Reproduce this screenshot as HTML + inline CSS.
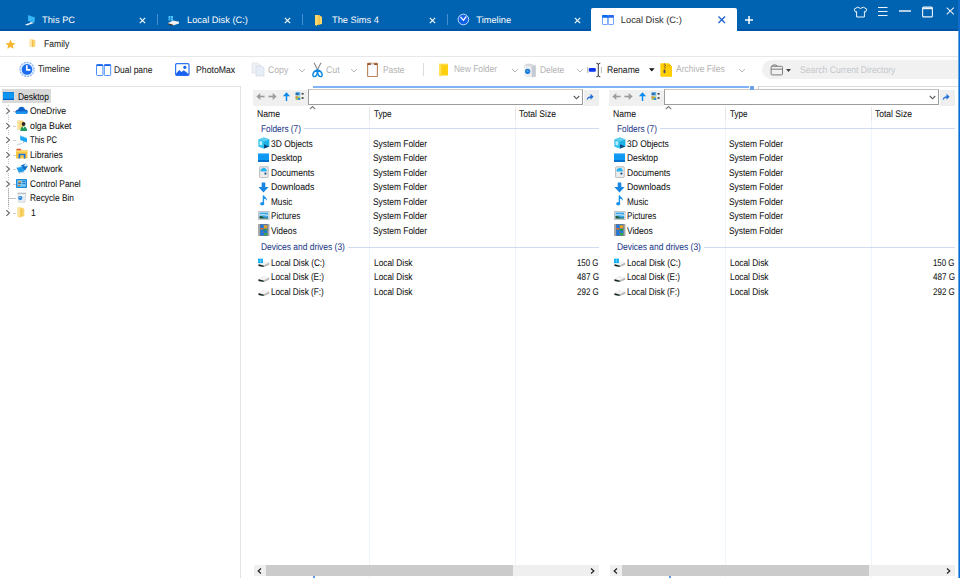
<!DOCTYPE html>
<html><head><meta charset="utf-8"><title>Explorer</title>
<style>
html,body{margin:0;padding:0;}
body{width:960px;height:578px;overflow:hidden;position:relative;background:#fff;font-family:"Liberation Sans",sans-serif;}
.t{position:absolute;white-space:nowrap;line-height:14px;text-rendering:geometricPrecision;-webkit-text-stroke:0.05px currentColor;}
.r{position:absolute;display:block;}
</style></head><body>
<div class="r" style="left:0px;top:0px;width:960px;height:29px;background:#0063b1;"></div>
<div class="r" style="left:0px;top:29px;width:960px;height:2px;background:#0052a6;"></div>
<div class="r" style="left:591px;top:8px;width:146px;height:23px;background:#fff;border-radius:2px 2px 0 0"></div>
<div class="r" style="left:157px;top:14px;width:1px;height:11px;background:#4a90d0;"></div>
<div class="r" style="left:302px;top:14px;width:1px;height:11px;background:#4a90d0;"></div>
<div class="r" style="left:447px;top:14px;width:1px;height:11px;background:#4a90d0;"></div>
<div class="t" style="left:42.00px;top:13.30px;font-size:9.3px;color:#fff;-webkit-text-stroke:0;">This PC</div>
<svg class="r" style="left:0px;top:0px;left:139.2px;top:16.8px;" width="7" height="7" viewBox="0 0 7 7"><path d="M0.8 0.8L6.2 6.2M6.2 0.8L0.8 6.2" stroke="#fff" stroke-width="1.1"/></svg>
<div class="t" style="left:187.00px;top:13.30px;font-size:9.3px;color:#fff;-webkit-text-stroke:0;">Local Disk (C:)</div>
<svg class="r" style="left:0px;top:0px;left:284.2px;top:16.8px;" width="7" height="7" viewBox="0 0 7 7"><path d="M0.8 0.8L6.2 6.2M6.2 0.8L0.8 6.2" stroke="#fff" stroke-width="1.1"/></svg>
<div class="t" style="left:332.00px;top:13.30px;font-size:9.3px;color:#fff;-webkit-text-stroke:0;">The Sims 4</div>
<svg class="r" style="left:0px;top:0px;left:429.2px;top:16.8px;" width="7" height="7" viewBox="0 0 7 7"><path d="M0.8 0.8L6.2 6.2M6.2 0.8L0.8 6.2" stroke="#fff" stroke-width="1.1"/></svg>
<div class="t" style="left:476.30px;top:13.30px;font-size:9.3px;color:#fff;-webkit-text-stroke:0;">Timeline</div>
<svg class="r" style="left:0px;top:0px;left:574.2px;top:16.8px;" width="7" height="7" viewBox="0 0 7 7"><path d="M0.8 0.8L6.2 6.2M6.2 0.8L0.8 6.2" stroke="#fff" stroke-width="1.1"/></svg>
<div class="t" style="left:620.80px;top:13.30px;font-size:9.3px;color:#333;">Local Disk (C:)</div>
<svg class="r" style="left:718px;top:16px;" width="8" height="8" viewBox="0 0 8 8"><path d="M0.5 0.5L7 7M7 0.5L0.5 7" stroke="#1a5fd0" stroke-width="1.3"/></svg>
<svg class="r" style="left:745px;top:16px;" width="8" height="8" viewBox="0 0 8 8"><path d="M4 0V8M0 4H8" stroke="#fff" stroke-width="1.5"/></svg>
<svg class="r" style="left:24px;top:14px;" width="12" height="12" viewBox="0 0 12 12"><path d="M4 1L11 3.5L10.5 8.5L4 7Z" fill="#33b5f5"/><path d="M1 10.5L7 8.5L9 9.2L3 11.5Z" fill="#e8eef5"/><path d="M6 8.3L9.5 9" stroke="#cde" stroke-width="1"/></svg>
<svg class="r" style="left:167px;top:15px;" width="13" height="11" viewBox="0 0 13 11"><path d="M1.5 1h2v2.2h-2zM4 1h2v2.2H4zM1.5 3.6h2v2h-2zM4 3.6h2v2H4z" fill="#4cc2ff"/><path d="M1 8L6 5.5L12 6.8V8.5L6 10.5L1 9.3Z" fill="#f0f0f0"/><path d="M1 8.8L6 10.3" stroke="#333" stroke-width="1.3"/></svg>
<svg class="r" style="left:314px;top:14px;" width="9" height="12" viewBox="0 0 9 12"><path d="M1 1H5L8 3V10L3 11V12L1 11Z" fill="#f8d66a"/><path d="M5 1V11" stroke="#e9b840" stroke-width="1"/></svg>
<svg class="r" style="left:457px;top:13px;" width="13" height="13" viewBox="0 0 13 13"><circle cx="6.4" cy="6.5" r="5.3" fill="#1260e6" stroke="#bfe0ff" stroke-width="1"/><path d="M3.5 3.8L6.4 7.3L9.3 3.5" stroke="#fff" stroke-width="1.3" fill="none"/></svg>
<svg class="r" style="left:602px;top:15px;" width="12" height="10" viewBox="0 0 12 10"><rect x="0.5" y="0.5" width="5.2" height="9" rx="0.6" fill="#fff" stroke="#5c9af6" stroke-width="0.9"/><rect x="6.3" y="0.5" width="5.2" height="9" rx="0.6" fill="#fff" stroke="#5c9af6" stroke-width="0.9"/><rect x="0.1" y="0.1" width="5.9" height="2.6" rx="0.6" fill="#0a6cf4"/><rect x="6" y="0.1" width="5.9" height="2.6" rx="0.6" fill="#2a6af0"/></svg>
<svg class="r" style="left:853px;top:6px;" width="15" height="12" viewBox="0 0 15 12"><path d="M4.6 1.2L1.2 3.1L2.4 6L3.6 5.5V11H11.4V5.5L12.6 6L13.8 3.1L10.4 1.2Q7.5 3.6 4.6 1.2Z" fill="none" stroke="#f2f6fb" stroke-width="1"/></svg>
<svg class="r" style="left:878px;top:6px;" width="10" height="11" viewBox="0 0 10 11"><path d="M0 1.5H9.5M0 5.5H9.5M0 9.5H9.5" stroke="#eef3f9" stroke-width="1.1"/></svg>
<svg class="r" style="left:899px;top:10px;" width="13" height="2" viewBox="0 0 13 2"><path d="M0 1H12" stroke="#eef3f9" stroke-width="1.5"/></svg>
<svg class="r" style="left:922px;top:6px;" width="11" height="12" viewBox="0 0 11 12"><rect x="0.6" y="1.1" width="9.8" height="9.8" rx="1" fill="none" stroke="#eef3f9" stroke-width="1.1"/><path d="M0.8 2.4H10.2" stroke="#eef3f9" stroke-width="1.6"/></svg>
<svg class="r" style="left:946px;top:7px;" width="9" height="8" viewBox="0 0 9 8"><path d="M0.7 0.7L7.8 7.3M7.8 0.7L0.7 7.3" stroke="#eef3f9" stroke-width="1.05"/></svg>
<svg class="r" style="left:5px;top:39px;" width="11" height="10" viewBox="0 0 11 10"><path d="M5.5 0.6L7 3.9L10.5 4.2L7.9 6.5L8.7 9.7L5.5 8L2.3 9.7L3.1 6.5L0.5 4.2L4 3.9Z" fill="#f7b731"/></svg>
<svg class="r" style="left:29px;top:39px;" width="7" height="9" viewBox="0 0 7 9"><path d="M0.7 0.6H4.6L6.3 1.6V7.4L3.4 8.2L0.7 7.6Z" fill="#fbd46a"/><path d="M0.7 0.6H3V7.8L0.7 7.6Z" fill="#fde7a8"/><path d="M3.6 1.2V7.8" stroke="#eab54a" stroke-width="0.8"/></svg>
<div class="t" style="left:43.75px;top:38.30px;font-size:9.7px;color:#222;transform:scaleX(0.8839);transform-origin:0 0;">Family</div>
<div class="r" style="left:0px;top:56px;width:958px;height:1px;background:#e8e8e8;"></div>
<svg class="r" style="left:19px;top:61px;" width="16" height="17" viewBox="0 0 16 17"><circle cx="8" cy="8.4" r="7.1" fill="#e4eefd" stroke="#8ab6f8" stroke-width="1.2" stroke-dasharray="2 1"/><circle cx="8" cy="8.4" r="5.3" fill="#1a6cf0"/><path d="M7.8 4.3V8.9H11.4" stroke="#fff" stroke-width="1.7" fill="none"/></svg>
<div class="t" style="left:37.80px;top:63.30px;font-size:9.7px;color:#222;transform:scaleX(0.8766);transform-origin:0 0;-webkit-text-stroke:0;">Timeline</div>
<svg class="r" style="left:96px;top:64px;" width="16" height="12" viewBox="0 0 16 12"><rect x="0.5" y="0.5" width="6.4" height="11" rx="0.8" fill="#fff" stroke="#4a90f8" stroke-width="1"/><rect x="8.3" y="0.5" width="6.4" height="11" rx="0.8" fill="#fff" stroke="#4a90f8" stroke-width="1"/><path d="M0.6 1.3H6.8M8.4 1.3H14.6" stroke="#1560e8" stroke-width="1.6"/></svg>
<div class="t" style="left:114.00px;top:64.30px;font-size:9.7px;color:#222;transform:scaleX(0.8704);transform-origin:0 0;">Dual pane</div>
<svg class="r" style="left:175px;top:63px;" width="15" height="13" viewBox="0 0 15 13"><rect x="0.6" y="0.6" width="13.4" height="11.8" rx="1.2" fill="#fff" stroke="#2f74f2" stroke-width="1.2"/><path d="M1 12.2V10.8L4.2 7L6.5 9L8.8 7.3L13.6 11V12.2Z" fill="#1a62f0"/><circle cx="9.8" cy="4.3" r="1.6" fill="#1a62f0"/></svg>
<div class="t" style="left:195.80px;top:64.30px;font-size:9.7px;color:#222;transform:scaleX(0.8971);transform-origin:0 0;">PhotoMax</div>
<svg class="r" style="left:251px;top:62px;" width="14" height="15" viewBox="0 0 14 15"><path d="M1 1H7L9 3V11H1Z" fill="#eef2f7" stroke="#dde3ea" stroke-width="0.8"/><path d="M5 4H11L13 6V14H5Z" fill="#e6edf5" stroke="#d5dde7" stroke-width="0.8"/></svg>
<div class="t" style="left:267.50px;top:64.30px;font-size:9.7px;color:#b2b2b2;transform:scaleX(0.8963);transform-origin:0 0;-webkit-text-stroke:0;">Copy</div>
<svg class="r" style="left:298px;top:68px;" width="8" height="5" viewBox="0 0 8 5"><path d="M1 1L4 4L7 1" stroke="#b8b8b8" fill="none"/></svg>
<svg class="r" style="left:311px;top:62px;" width="13" height="16" viewBox="0 0 13 16"><path d="M3 0.8L6.4 7.6M10 0.8L6.6 7.6" stroke="#8a8a8a" stroke-width="1.1"/><path d="M6.2 8Q2.5 9 1.8 12.4Q1.8 14.6 3.6 14.6Q5.6 14.4 6.2 11.5Z" fill="none" stroke="#0f8ae0" stroke-width="1.4"/><path d="M6.8 8Q10.5 9 11.2 12.4Q11.2 14.6 9.4 14.6Q7.4 14.4 6.8 11.5Z" fill="none" stroke="#0f8ae0" stroke-width="1.4"/></svg>
<div class="t" style="left:326.00px;top:64.30px;font-size:9.7px;color:#b2b2b2;transform:scaleX(0.9083);transform-origin:0 0;-webkit-text-stroke:0;">Cut</div>
<svg class="r" style="left:350px;top:68px;" width="8" height="5" viewBox="0 0 8 5"><path d="M1 1L4 4L7 1" stroke="#b8b8b8" fill="none"/></svg>
<svg class="r" style="left:367px;top:62px;" width="11" height="15" viewBox="0 0 11 15"><rect x="0.6" y="1.3" width="9.8" height="13.2" rx="0.6" fill="#fafcff" stroke="#bb845a" stroke-width="1.1"/><path d="M0.6 1.3H3.8V3H0.6ZM7.2 1.3H10.4V3H7.2Z" fill="#9a5020"/><path d="M5.5 0.2L7 3H4Z" fill="#d8d8d8"/></svg>
<div class="t" style="left:383.00px;top:64.30px;font-size:9.7px;color:#b2b2b2;transform:scaleX(0.8675);transform-origin:0 0;-webkit-text-stroke:0;">Paste</div>
<div class="r" style="left:423px;top:63px;width:1px;height:13px;background:#dcdcdc;"></div>
<svg class="r" style="left:438px;top:63px;" width="11" height="14" viewBox="0 0 11 14"><path d="M1 0.7H10V12.4H3.2V13.6L1 12.2Z" fill="#ffcf12"/><path d="M1 0.7L3.2 1.6V13.6L1 12.2Z" fill="#ffe15a"/><path d="M3.2 1.6H10" stroke="#ffe880" stroke-width="0.6"/></svg>
<div class="t" style="left:453.50px;top:63.30px;font-size:9.7px;color:#b2b2b2;transform:scaleX(0.8687);transform-origin:0 0;-webkit-text-stroke:0;">New Folder</div>
<svg class="r" style="left:511px;top:68px;" width="8" height="5" viewBox="0 0 8 5"><path d="M1 1L4 4L7 1" stroke="#b8b8b8" fill="none"/></svg>
<svg class="r" style="left:523px;top:62px;" width="14" height="16" viewBox="0 0 14 16"><path d="M1 3.2L5 1.6L12.8 3.2V14.4L9.2 15.6L1.6 14.4Z" fill="#e9ecef"/><path d="M8.4 4.2L12.8 3.2V14.4L9.2 15.6Z" fill="#c5cbd2"/><path d="M1 3.2L5 1.6L12.8 3.2L8.4 4.2Z" fill="#d4d8dc"/><circle cx="4.6" cy="9.3" r="2.6" fill="#1479d6"/><path d="M3.8 9.8L4.6 8.6L5.4 9.8" stroke="#cfe8ff" stroke-width="0.6" fill="none"/></svg>
<div class="t" style="left:539.80px;top:64.30px;font-size:9.7px;color:#b2b2b2;transform:scaleX(0.8633);transform-origin:0 0;-webkit-text-stroke:0;">Delete</div>
<svg class="r" style="left:576px;top:68px;" width="8" height="5" viewBox="0 0 8 5"><path d="M1 1L4 4L7 1" stroke="#b8b8b8" fill="none"/></svg>
<svg class="r" style="left:586px;top:62px;" width="17" height="16" viewBox="0 0 17 16"><path d="M1.7 5V11" stroke="#9a9a9a" stroke-width="0.8"/><rect x="2.8" y="6" width="7" height="3.7" rx="1" fill="#0a36f0"/><path d="M10.3 1.2Q12.3 1.2 12.3 2.8Q12.3 1.2 14.3 1.2M12.3 2.8V13.2M10.3 14.8Q12.3 14.8 12.3 13.2Q12.3 14.8 14.3 14.8" stroke="#262626" stroke-width="0.9" fill="none"/><path d="M15.4 5V11" stroke="#ababab" stroke-width="0.8"/></svg>
<div class="t" style="left:607.00px;top:64.30px;font-size:9.7px;color:#222;transform:scaleX(0.8918);transform-origin:0 0;">Rename</div>
<svg class="r" style="left:649px;top:68px;" width="6" height="4" viewBox="0 0 6 4"><path d="M0 0.3H5.6L2.8 3.4Z" fill="#111"/></svg>
<svg class="r" style="left:660px;top:63px;" width="13" height="14" viewBox="0 0 13 14"><path d="M0.4 0.3H8.6L12 3.6V13.8H0.4Z" fill="#ffcf00"/><path d="M8.6 0.3V3.6H12Z" fill="#f0bf00"/><circle cx="4.4" cy="1.2" r="0.6" fill="#7a4a3a"/><circle cx="5.4" cy="2.4" r="0.6" fill="#7a4a5a"/><circle cx="4.4" cy="3.6" r="0.6" fill="#7a4a3a"/><circle cx="5.4" cy="4.8" r="0.6" fill="#7a4a5a"/><circle cx="4.4" cy="6" r="0.6" fill="#7a4a3a"/><rect x="3.6" y="6.8" width="1.8" height="3.4" rx="0.8" fill="#4a4a6a"/><path d="M7.5 2.5L8 3.5" stroke="#b89a30" stroke-width="0.6"/></svg>
<div class="t" style="left:675.70px;top:63.30px;font-size:9.7px;color:#b2b2b2;transform:scaleX(0.8788);transform-origin:0 0;-webkit-text-stroke:0;">Archive Files</div>
<svg class="r" style="left:738px;top:68px;" width="8" height="5" viewBox="0 0 8 5"><path d="M1 1L4 4L7 1" stroke="#b8b8b8" fill="none"/></svg>
<div class="r" style="left:762px;top:60px;width:200px;height:19px;background:#f1f1f1;border-radius:10px 0 0 10px"></div>
<svg class="r" style="left:770px;top:64px;" width="14" height="12" viewBox="0 0 14 12"><rect x="1.1" y="2.3" width="11.4" height="8.6" rx="1" fill="none" stroke="#7c7c7c" stroke-width="1"/><path d="M1.1 5.2H12.5M1.4 2.5L2.8 1H6.2L7.2 2.3" stroke="#7c7c7c" stroke-width="1" fill="none"/></svg>
<svg class="r" style="left:786px;top:69px;" width="5" height="3" viewBox="0 0 5 3"><path d="M0 0H5L2.5 3Z" fill="#444"/></svg>
<div class="t" style="left:800.00px;top:64.30px;font-size:9.7px;color:#c4c8cc;transform:scaleX(0.8902);transform-origin:0 0;-webkit-text-stroke:0;">Search Current Directory</div>
<div class="r" style="left:0px;top:86px;width:241px;height:1px;background:#e3e3e3;"></div>
<div class="r" style="left:758px;top:86px;width:200px;height:1px;background:#dedede;"></div>
<div class="r" style="left:758px;top:86px;width:1px;height:4px;background:#d0d0d0;"></div>
<div class="r" style="left:240px;top:86px;width:1px;height:492px;background:#e3e3e3;"></div>
<div class="r" style="left:2px;top:89px;width:49px;height:14px;background:#d9d9d9;"></div>
<div class="t" style="left:17.60px;top:91.30px;font-size:9.7px;color:#111;transform:scaleX(0.8708);transform-origin:0 0;">Desktop</div>
<div class="t" style="left:30.30px;top:105.30px;font-size:9.7px;color:#111;transform:scaleX(0.8784);transform-origin:0 0;">OneDrive</div>
<svg class="r" style="left:5px;top:107px;" width="6" height="8" viewBox="0 0 6 8"><path d="M1.3 1.2L4.5 4L1.3 6.8" stroke="#666" fill="none" stroke-width="1.1"/></svg>
<div class="r" style="left:13px;top:111px;width:3px;height:1px;background:#cfcfcf;"></div>
<div class="r" style="left:8px;top:105px;width:1px;height:2px;background:#fff;background:repeating-linear-gradient(to bottom,#c2c2c2 0 1px,transparent 1px 2px)"></div>
<div class="t" style="left:30.20px;top:120.30px;font-size:9.7px;color:#111;transform:scaleX(0.9077);transform-origin:0 0;">olga Buket</div>
<svg class="r" style="left:5px;top:122px;" width="6" height="8" viewBox="0 0 6 8"><path d="M1.3 1.2L4.5 4L1.3 6.8" stroke="#666" fill="none" stroke-width="1.1"/></svg>
<div class="r" style="left:13px;top:126px;width:3px;height:1px;background:#cfcfcf;"></div>
<div class="r" style="left:8px;top:115px;width:1px;height:7px;background:#fff;background:repeating-linear-gradient(to bottom,#c2c2c2 0 1px,transparent 1px 2px)"></div>
<div class="t" style="left:30.30px;top:134.30px;font-size:9.7px;color:#111;transform:scaleX(0.7830);transform-origin:0 0;">This PC</div>
<svg class="r" style="left:5px;top:136px;" width="6" height="8" viewBox="0 0 6 8"><path d="M1.3 1.2L4.5 4L1.3 6.8" stroke="#666" fill="none" stroke-width="1.1"/></svg>
<div class="r" style="left:13px;top:140px;width:3px;height:1px;background:#cfcfcf;"></div>
<div class="r" style="left:8px;top:130px;width:1px;height:6px;background:#fff;background:repeating-linear-gradient(to bottom,#c2c2c2 0 1px,transparent 1px 2px)"></div>
<div class="t" style="left:30.30px;top:149.30px;font-size:9.7px;color:#111;transform:scaleX(0.8817);transform-origin:0 0;">Libraries</div>
<svg class="r" style="left:5px;top:151px;" width="6" height="8" viewBox="0 0 6 8"><path d="M1.3 1.2L4.5 4L1.3 6.8" stroke="#666" fill="none" stroke-width="1.1"/></svg>
<div class="r" style="left:13px;top:155px;width:3px;height:1px;background:#cfcfcf;"></div>
<div class="r" style="left:8px;top:144px;width:1px;height:7px;background:#fff;background:repeating-linear-gradient(to bottom,#c2c2c2 0 1px,transparent 1px 2px)"></div>
<div class="t" style="left:30.40px;top:163.30px;font-size:9.7px;color:#111;transform:scaleX(0.9145);transform-origin:0 0;">Network</div>
<svg class="r" style="left:5px;top:165px;" width="6" height="8" viewBox="0 0 6 8"><path d="M1.3 1.2L4.5 4L1.3 6.8" stroke="#666" fill="none" stroke-width="1.1"/></svg>
<div class="r" style="left:13px;top:169px;width:3px;height:1px;background:#cfcfcf;"></div>
<div class="r" style="left:8px;top:159px;width:1px;height:6px;background:#fff;background:repeating-linear-gradient(to bottom,#c2c2c2 0 1px,transparent 1px 2px)"></div>
<div class="t" style="left:30.30px;top:178.30px;font-size:9.7px;color:#111;transform:scaleX(0.8642);transform-origin:0 0;">Control Panel</div>
<svg class="r" style="left:5px;top:180px;" width="6" height="8" viewBox="0 0 6 8"><path d="M1.3 1.2L4.5 4L1.3 6.8" stroke="#666" fill="none" stroke-width="1.1"/></svg>
<div class="r" style="left:13px;top:184px;width:3px;height:1px;background:#cfcfcf;"></div>
<div class="r" style="left:8px;top:173px;width:1px;height:7px;background:#fff;background:repeating-linear-gradient(to bottom,#c2c2c2 0 1px,transparent 1px 2px)"></div>
<div class="t" style="left:30.30px;top:192.30px;font-size:9.7px;color:#111;transform:scaleX(0.8591);transform-origin:0 0;">Recycle Bin</div>
<div class="r" style="left:9px;top:198px;width:7px;height:1px;background:#c4c4c4;"></div>
<div class="r" style="left:8px;top:188px;width:1px;height:18px;background:#fff;background:repeating-linear-gradient(to bottom,#a8a8a8 0 1px,#dadada 1px 2px)"></div>
<div class="t" style="left:31.00px;top:207.30px;font-size:9.7px;color:#111;transform:scaleX(0.8900);transform-origin:0 0;">1</div>
<svg class="r" style="left:5px;top:209px;" width="6" height="8" viewBox="0 0 6 8"><path d="M1.3 1.2L4.5 4L1.3 6.8" stroke="#666" fill="none" stroke-width="1.1"/></svg>
<div class="r" style="left:13px;top:213px;width:3px;height:1px;background:#cfcfcf;"></div>
<div class="r" style="left:8px;top:206px;width:1px;height:3px;background:#fff;background:repeating-linear-gradient(to bottom,#c2c2c2 0 1px,transparent 1px 2px)"></div>
<svg class="r" style="left:3px;top:92px;" width="11" height="8" viewBox="0 0 11 8"><rect x="0" y="0" width="11" height="8" fill="#0c95f2"/><rect x="0" y="6.8" width="11" height="1.2" fill="#0062c8"/><rect x="0" y="0" width="11" height="0.8" fill="#0a7ad8"/></svg>
<svg class="r" style="left:15px;top:106px;" width="13" height="8" viewBox="0 0 13 8"><path d="M3 8Q0 8 0.5 5.5Q1 3.5 3 3.8Q4 0.5 7 0.8Q9.5 1 10 3.5Q13 3.7 12.8 6Q12.5 8 10.5 8Z" fill="#0f62c8"/><path d="M0.5 6Q1 8 3 8H10.5Q12.5 8 12.8 6Q10 4.8 6 5.6Q3 4.5 0.5 6Z" fill="#1f96ee"/></svg>
<svg class="r" style="left:17px;top:120px;" width="11" height="12" viewBox="0 0 11 12"><path d="M0.5 0.5H5.5L7 1.8V8.5L0.5 10Z" fill="#f6d47a"/><path d="M0.5 0.5H2.5V10H0.5Z" fill="#fbe3a0"/><circle cx="6.6" cy="4" r="1.9" fill="#2e2620"/><path d="M3.3 11Q3.6 6.6 6.6 6.6Q9.8 6.6 10.2 11Z" fill="#1f9a5a"/><path d="M5.8 6.8L6.6 8.5L7.4 6.8Z" fill="#fff"/></svg>
<svg class="r" style="left:16px;top:135px;" width="12" height="11" viewBox="0 0 12 11"><path d="M4.2 0.6L11 3.2V7.4L4.2 5Z" fill="#19a6f2"/><path d="M4.2 0.6L11 3.2" stroke="#8fd8ff" stroke-width="0.8"/><path d="M7.5 6.2V8" stroke="#9bb0c0" stroke-width="0.8"/><path d="M0.5 9.3L5.5 7.8L7.5 8.3L2.5 10.5Z" fill="#d3dfea"/></svg>
<svg class="r" style="left:16px;top:148px;" width="12" height="11" viewBox="0 0 12 11"><rect x="0" y="2" width="11.5" height="8.5" fill="#f9c843"/><rect x="0" y="2" width="11.5" height="2" fill="#fbd970"/><path d="M0.5 2.2V0.8H4.5L5.5 2.2Z" fill="#e2542a"/><path d="M2.5 10.5V5.8H9.5V10.5H7.8V7.3H4.2V10.5Z" fill="#1a72da"/></svg>
<svg class="r" style="left:16px;top:163px;" width="12" height="11" viewBox="0 0 12 11"><path d="M5 2.5L9.5 0.6L11.8 3.2L9 7.5L5 5Z" fill="#0f6fc6"/><path d="M0.5 4.8L6.2 3.4L8.6 8.3L2.8 9.8Z" fill="#1e9ae8"/><path d="M0.5 4.8L6.2 3.4" stroke="#9ad4f8" stroke-width="0.8"/><path d="M3 10.5L8 9.2" stroke="#c0ccd8" stroke-width="0.8"/><circle cx="9.6" cy="2.3" r="1.2" fill="#d8ecfa"/></svg>
<svg class="r" style="left:16px;top:179px;" width="11" height="9" viewBox="0 0 11 9"><rect x="0" y="0" width="11" height="9" rx="0.8" fill="#1a8ce0"/><rect x="1.2" y="1.2" width="8.6" height="6.6" fill="#74c8f6"/><circle cx="3.6" cy="3.4" r="1.6" fill="#f0b732"/><path d="M2 3.4A1.6 1.6 0 0 0 5.2 3.4Z" fill="#2a67c0"/><path d="M6.3 2.5H9.2M6.3 4.5H9.2" stroke="#1f64b8" stroke-width="0.9"/><rect x="1.8" y="6" width="2.4" height="1.2" fill="#c8702a"/></svg>
<svg class="r" style="left:17px;top:192px;" width="10" height="11" viewBox="0 0 10 11"><path d="M0.8 1.5H8.8L8 10.2H1.6Z" fill="#e8edf2" stroke="#c2c9d0" stroke-width="0.6"/><path d="M0.5 1.2H9.2" stroke="#aeb6be" stroke-width="0.9"/><path d="M2.2 3.5L8 3.5" stroke="#fff" stroke-width="0.8"/><circle cx="3.3" cy="6" r="2.1" fill="#1a7fd8"/><path d="M2.3 6.2L3.2 5.2L4.2 6.4" stroke="#fff" stroke-width="0.6" fill="none"/></svg>
<svg class="r" style="left:17px;top:207px;" width="8" height="11" viewBox="0 0 8 11"><path d="M0.6 0.5H4.5L7.3 1.8V9L3 10.4V10.8L0.6 9.6Z" fill="#fad36b"/><path d="M0.6 0.5H3V9.8L0.6 9.6Z" fill="#fde39a"/><path d="M4.3 1.5V9.8" stroke="#efbe4a" stroke-width="0.9"/></svg>
<div class="r" style="left:253px;top:90px;width:55px;height:16px;background:#f0f0f0;"></div>
<svg class="r" style="left:256px;top:92px;" width="9" height="9" viewBox="0 0 9 9"><path d="M8.6 4.5H3.2" stroke="#9c9c9c" stroke-width="1.6"/><path d="M0.4 4.5L4.3 1V8Z" fill="#9c9c9c"/></svg>
<svg class="r" style="left:268px;top:92px;" width="9" height="9" viewBox="0 0 9 9"><path d="M0.4 4.5H5.8" stroke="#9c9c9c" stroke-width="1.6"/><path d="M8.6 4.5L4.7 1V8Z" fill="#9c9c9c"/></svg>
<svg class="r" style="left:282px;top:92px;" width="9" height="9" viewBox="0 0 9 9"><path d="M4.5 3.5V9" stroke="#0c8cf0" stroke-width="1.5"/><path d="M4.5 0.3L0.9 4.3H8.1Z" fill="#0c8cf0"/></svg>
<svg class="r" style="left:295px;top:91px;" width="10" height="10" viewBox="0 0 10 10"><rect x="0.6" y="1" width="4.6" height="3.6" fill="#5aaee8"/><rect x="0.6" y="2.4" width="3" height="1.2" fill="#1c3e70"/><rect x="0.6" y="5.4" width="4.6" height="3.6" fill="#8fd06a"/><rect x="0.6" y="5.4" width="2.2" height="2" fill="#e8803a"/><rect x="3" y="7" width="2.2" height="2" fill="#2f8ae0"/><rect x="6.6" y="2" width="2" height="1.6" fill="#3a3a3a"/><rect x="6.6" y="6.2" width="2" height="1.6" fill="#3a3a3a"/></svg>
<div class="r" style="left:308px;top:89px;width:275px;height:16px;background:#fff;box-sizing:border-box;border:1px solid #9c9c9c;border-top-color:#c2c2c2"></div>
<svg class="r" style="left:573px;top:95px;" width="7" height="5" viewBox="0 0 7 5"><path d="M0.8 1L3.5 3.8L6.2 1" stroke="#585858" stroke-width="1.1" fill="none"/></svg>
<div class="r" style="left:584px;top:90px;width:15px;height:16px;background:#efefef;"></div>
<svg class="r" style="left:586px;top:93px;" width="8" height="8" viewBox="0 0 8 8"><path d="M0.8 7.5Q0.5 3.5 4.5 3.2V0.8L7.6 3.8L4.5 6.8V4.8Q2 4.8 0.8 7.5Z" fill="#1f6fd6"/></svg>
<svg class="r" style="left:309px;top:105px;" width="7" height="5" viewBox="0 0 7 5"><path d="M0.8 4.2L3.5 1.5L6.2 4.2" stroke="#7a7a7a" fill="none" stroke-width="1.1"/></svg>
<div class="t" style="left:257.20px;top:108.30px;font-size:9.7px;color:#111;transform:scaleX(0.8881);transform-origin:0 0;">Name</div>
<div class="t" style="left:373.70px;top:108.30px;font-size:9.7px;color:#111;transform:scaleX(0.8314);transform-origin:0 0;">Type</div>
<div class="t" style="left:519.20px;top:108.30px;font-size:9.7px;color:#111;transform:scaleX(0.8775);transform-origin:0 0;">Total Size</div>
<div class="r" style="left:369px;top:107px;width:1px;height:14px;background:#e5e5e5;"></div>
<div class="r" style="left:515px;top:107px;width:1px;height:14px;background:#e5e5e5;"></div>
<div class="r" style="left:369px;top:121px;width:1px;height:457px;background:#eef5fc;"></div>
<div class="r" style="left:515px;top:121px;width:1px;height:457px;background:#eef5fc;"></div>
<div class="t" style="left:260.80px;top:123.30px;font-size:9.7px;color:#1e3a8a;transform:scaleX(0.8529);transform-origin:0 0;">Folders (7)</div>
<div class="r" style="left:304px;top:128px;width:295px;height:1px;background:#cfdcf0;"></div>
<div class="t" style="left:271.30px;top:138.30px;font-size:9.7px;color:#111;transform:scaleX(0.8714);transform-origin:0 0;">3D Objects</div>
<div class="t" style="left:373.10px;top:138.30px;font-size:9.7px;color:#111;transform:scaleX(0.8654);transform-origin:0 0;">System Folder</div>
<div class="t" style="left:271.30px;top:152.30px;font-size:9.7px;color:#111;transform:scaleX(0.8708);transform-origin:0 0;">Desktop</div>
<div class="t" style="left:373.10px;top:152.30px;font-size:9.7px;color:#111;transform:scaleX(0.8654);transform-origin:0 0;">System Folder</div>
<div class="t" style="left:271.30px;top:167.30px;font-size:9.7px;color:#111;transform:scaleX(0.8842);transform-origin:0 0;">Documents</div>
<div class="t" style="left:373.10px;top:167.30px;font-size:9.7px;color:#111;transform:scaleX(0.8654);transform-origin:0 0;">System Folder</div>
<div class="t" style="left:271.30px;top:181.30px;font-size:9.7px;color:#111;transform:scaleX(0.9048);transform-origin:0 0;">Downloads</div>
<div class="t" style="left:373.10px;top:181.30px;font-size:9.7px;color:#111;transform:scaleX(0.8654);transform-origin:0 0;">System Folder</div>
<div class="t" style="left:271.30px;top:196.30px;font-size:9.7px;color:#111;transform:scaleX(0.8453);transform-origin:0 0;">Music</div>
<div class="t" style="left:373.10px;top:196.30px;font-size:9.7px;color:#111;transform:scaleX(0.8654);transform-origin:0 0;">System Folder</div>
<div class="t" style="left:271.30px;top:210.30px;font-size:9.7px;color:#111;transform:scaleX(0.8339);transform-origin:0 0;">Pictures</div>
<div class="t" style="left:373.10px;top:210.30px;font-size:9.7px;color:#111;transform:scaleX(0.8654);transform-origin:0 0;">System Folder</div>
<div class="t" style="left:271.30px;top:225.30px;font-size:9.7px;color:#111;transform:scaleX(0.8715);transform-origin:0 0;">Videos</div>
<div class="t" style="left:373.10px;top:225.30px;font-size:9.7px;color:#111;transform:scaleX(0.8654);transform-origin:0 0;">System Folder</div>
<div class="t" style="left:260.60px;top:241.30px;font-size:9.7px;color:#1e3a8a;transform:scaleX(0.8703);transform-origin:0 0;">Devices and drives (3)</div>
<div class="r" style="left:348px;top:247px;width:251px;height:1px;background:#cfdcf0;"></div>
<div class="t" style="left:271.10px;top:257.30px;font-size:9.7px;color:#111;transform:scaleX(0.8477);transform-origin:0 0;">Local Disk (C:)</div>
<div class="t" style="left:577.40px;top:257.30px;font-size:9.7px;color:#111;transform:scaleX(0.8096);transform-origin:0 0;">150 G</div>
<div class="t" style="left:373.90px;top:257.30px;font-size:9.7px;color:#111;transform:scaleX(0.8613);transform-origin:0 0;">Local Disk</div>
<div class="t" style="left:271.10px;top:271.30px;font-size:9.7px;color:#111;transform:scaleX(0.8422);transform-origin:0 0;">Local Disk (E:)</div>
<div class="t" style="left:576.60px;top:271.30px;font-size:9.7px;color:#111;transform:scaleX(0.8399);transform-origin:0 0;">487 G</div>
<div class="t" style="left:373.90px;top:271.30px;font-size:9.7px;color:#111;transform:scaleX(0.8613);transform-origin:0 0;">Local Disk</div>
<div class="t" style="left:271.10px;top:286.30px;font-size:9.7px;color:#111;transform:scaleX(0.8446);transform-origin:0 0;">Local Disk (F:)</div>
<div class="t" style="left:577.00px;top:286.30px;font-size:9.7px;color:#111;transform:scaleX(0.8247);transform-origin:0 0;">292 G</div>
<div class="t" style="left:373.90px;top:286.30px;font-size:9.7px;color:#111;transform:scaleX(0.8613);transform-origin:0 0;">Local Disk</div>
<svg class="r" style="left:258px;top:137px;" width="12" height="12" viewBox="0 0 12 12"><path d="M6 0.6L11.4 2.6V9.4L6 11.4L0.6 9.4V2.6Z" fill="#1fb2e4"/><path d="M0.6 2.6L6 0.6L11.4 2.6L6 4.6Z" fill="#5fd0f2"/><path d="M0.6 2.6L6 4.6V11.4L0.6 9.4Z" fill="#2cc0ec"/><path d="M1.5 4.2H4.2V8.2H1.5Z" fill="#bdeeff"/><path d="M6 11.4L11.4 9.4L6 7.2Z" fill="#10477f"/></svg>
<svg class="r" style="left:258px;top:153px;" width="11" height="9" viewBox="0 0 11 9"><rect x="0" y="0.6" width="11" height="8.2" fill="#0f98f2"/><rect x="0" y="7.2" width="11" height="1.6" fill="#0066c4"/><rect x="0" y="0.6" width="11" height="0.8" fill="#2aa8f6"/></svg>
<svg class="r" style="left:259px;top:166px;" width="10" height="12" viewBox="0 0 10 12"><rect x="0.6" y="0.8" width="8.6" height="10.8" rx="0.8" fill="#ececec" stroke="#b4b4b4" stroke-width="0.9"/><path d="M1.5 4.8Q1.4 2.6 3.3 2.6Q4 1.3 5.4 1.9Q7.3 1.9 7.4 3.8Q8.3 4.3 7.6 5.6H2.2Q1.6 5.4 1.5 4.8Z" fill="#2ab4f0"/><circle cx="6.4" cy="7.6" r="1.1" fill="#1c4f86"/></svg>
<svg class="r" style="left:258px;top:182px;" width="11" height="11" viewBox="0 0 11 11"><path d="M3.7 0.6H7.3V5H10.6L5.5 10.6L0.4 5H3.7Z" fill="#1686e2"/></svg>
<svg class="r" style="left:260px;top:195px;" width="8" height="11" viewBox="0 0 8 11"><path d="M3.4 0.4V8.3" stroke="#1c92ea" stroke-width="1.4"/><ellipse cx="2.2" cy="8.7" rx="2.1" ry="1.8" fill="#1c92ea"/><path d="M3.2 0.4Q6.8 2.2 7.2 5.8Q6 3.8 3.6 3.6Z" fill="#1c92ea"/></svg>
<svg class="r" style="left:258px;top:211px;" width="12" height="9" viewBox="0 0 12 9"><rect x="0.5" y="0.5" width="10.6" height="8" fill="#f4f4f4" stroke="#bdbdbd" stroke-width="0.9"/><rect x="1.5" y="1.5" width="8.6" height="6" fill="#3aa6ea"/><path d="M1.5 3.6Q5.5 2.6 10.1 3.8V4.8Q6 3.8 1.5 4.6Z" fill="#e6f4ff"/><path d="M1.5 7.5V5.2Q3.5 4.6 5.5 6.2Q7.5 7 10.1 6.6V7.5Z" fill="#1f5a34"/></svg>
<svg class="r" style="left:258px;top:224px;" width="12" height="12" viewBox="0 0 12 12"><rect x="0.4" y="0" width="10.8" height="12" fill="#7a7a7a"/><rect x="0.4" y="0" width="1.6" height="12" fill="#a8a8a8"/><rect x="9.6" y="0" width="1.6" height="12" fill="#a8a8a8"/><rect x="2.4" y="0.6" width="6.8" height="10.8" fill="#1c78e0"/><path d="M5.5 1.2H9.2V4.5H6Z" fill="#f0a020"/><path d="M2.4 4H5.5V5.6H2.4Z" fill="#e86a1a"/><path d="M5.5 5H9.2V6.6H5.5Z" fill="#2a9a3a"/><path d="M6 9H9.2V11.4H6Z" fill="#3aa848"/><path d="M5 7.2L6.6 8.2L5 9Z" fill="#c46a2a"/></svg>
<svg class="r" style="left:258px;top:0px;top:258px;" width="12" height="10" viewBox="0 0 12 10"><path d="M0.5 6.3L5 3.3L11.2 4.7V6.7L5.6 9.1L0.5 7.9Z" fill="#d0d0d0"/><path d="M0.5 6.3L5 3.3L11.2 4.7L5.6 7.4Z" fill="#f3f3f3"/><path d="M5.6 7.4L11.2 4.7V6.7L5.6 9.1Z" fill="#b9b9b9"/><path d="M0.5 6.3L5.6 7.4V9.1L0.5 7.9Z" fill="#1c1c1c"/><path d="M3.6 7.6L5 7.9V8.6L3.6 8.3Z" fill="#26c04e"/><rect x="0" y="0.7" width="5" height="4.4" fill="#08aaf2"/><path d="M2.5 0.7V5.1M0 2.9H5" stroke="#8fe0ff" stroke-width="0.45"/></svg>
<svg class="r" style="left:258px;top:0px;top:272.5px;" width="12" height="10" viewBox="0 0 12 10"><path d="M0.5 6.3L5 3.3L11.2 4.7V6.7L5.6 9.1L0.5 7.9Z" fill="#d0d0d0"/><path d="M0.5 6.3L5 3.3L11.2 4.7L5.6 7.4Z" fill="#f3f3f3"/><path d="M5.6 7.4L11.2 4.7V6.7L5.6 9.1Z" fill="#b9b9b9"/><path d="M0.5 6.3L5.6 7.4V9.1L0.5 7.9Z" fill="#1c1c1c"/><path d="M3.6 7.6L5 7.9V8.6L3.6 8.3Z" fill="#26c04e"/></svg>
<svg class="r" style="left:258px;top:0px;top:287px;" width="12" height="10" viewBox="0 0 12 10"><path d="M0.5 6.3L5 3.3L11.2 4.7V6.7L5.6 9.1L0.5 7.9Z" fill="#d0d0d0"/><path d="M0.5 6.3L5 3.3L11.2 4.7L5.6 7.4Z" fill="#f3f3f3"/><path d="M5.6 7.4L11.2 4.7V6.7L5.6 9.1Z" fill="#b9b9b9"/><path d="M0.5 6.3L5.6 7.4V9.1L0.5 7.9Z" fill="#1c1c1c"/><path d="M3.6 7.6L5 7.9V8.6L3.6 8.3Z" fill="#26c04e"/></svg>
<div class="r" style="left:254px;top:565px;width:345px;height:11px;background:#efefef;"></div>
<div class="r" style="left:266px;top:565px;width:247px;height:11px;background:#cbcbcb;"></div>
<svg class="r" style="left:257px;top:568px;" width="5" height="6" viewBox="0 0 5 6"><path d="M4 0.5L1.2 3L4 5.5" stroke="#222" stroke-width="1.2" fill="none"/></svg>
<svg class="r" style="left:590px;top:568px;" width="5" height="6" viewBox="0 0 5 6"><path d="M1 0.5L3.8 3L1 5.5" stroke="#222" stroke-width="1.2" fill="none"/></svg>
<div class="r" style="left:313px;top:576px;width:2px;height:2px;background:#5a9ae8;"></div>
<div class="r" style="left:609px;top:90px;width:55px;height:16px;background:#f0f0f0;"></div>
<svg class="r" style="left:612px;top:92px;" width="9" height="9" viewBox="0 0 9 9"><path d="M8.6 4.5H3.2" stroke="#9c9c9c" stroke-width="1.6"/><path d="M0.4 4.5L4.3 1V8Z" fill="#9c9c9c"/></svg>
<svg class="r" style="left:624px;top:92px;" width="9" height="9" viewBox="0 0 9 9"><path d="M0.4 4.5H5.8" stroke="#9c9c9c" stroke-width="1.6"/><path d="M8.6 4.5L4.7 1V8Z" fill="#9c9c9c"/></svg>
<svg class="r" style="left:638px;top:92px;" width="9" height="9" viewBox="0 0 9 9"><path d="M4.5 3.5V9" stroke="#0c8cf0" stroke-width="1.5"/><path d="M4.5 0.3L0.9 4.3H8.1Z" fill="#0c8cf0"/></svg>
<svg class="r" style="left:651px;top:91px;" width="10" height="10" viewBox="0 0 10 10"><rect x="0.6" y="1" width="4.6" height="3.6" fill="#5aaee8"/><rect x="0.6" y="2.4" width="3" height="1.2" fill="#1c3e70"/><rect x="0.6" y="5.4" width="4.6" height="3.6" fill="#8fd06a"/><rect x="0.6" y="5.4" width="2.2" height="2" fill="#e8803a"/><rect x="3" y="7" width="2.2" height="2" fill="#2f8ae0"/><rect x="6.6" y="2" width="2" height="1.6" fill="#3a3a3a"/><rect x="6.6" y="6.2" width="2" height="1.6" fill="#3a3a3a"/></svg>
<div class="r" style="left:664px;top:89px;width:275px;height:16px;background:#fff;box-sizing:border-box;border:1px solid #9c9c9c;border-top-color:#c2c2c2"></div>
<svg class="r" style="left:929px;top:95px;" width="7" height="5" viewBox="0 0 7 5"><path d="M0.8 1L3.5 3.8L6.2 1" stroke="#585858" stroke-width="1.1" fill="none"/></svg>
<div class="r" style="left:940px;top:90px;width:15px;height:16px;background:#efefef;"></div>
<svg class="r" style="left:942px;top:93px;" width="8" height="8" viewBox="0 0 8 8"><path d="M0.8 7.5Q0.5 3.5 4.5 3.2V0.8L7.6 3.8L4.5 6.8V4.8Q2 4.8 0.8 7.5Z" fill="#1f6fd6"/></svg>
<svg class="r" style="left:665px;top:105px;" width="7" height="5" viewBox="0 0 7 5"><path d="M0.8 4.2L3.5 1.5L6.2 4.2" stroke="#7a7a7a" fill="none" stroke-width="1.1"/></svg>
<div class="t" style="left:613.20px;top:108.30px;font-size:9.7px;color:#111;transform:scaleX(0.8881);transform-origin:0 0;">Name</div>
<div class="t" style="left:729.70px;top:108.30px;font-size:9.7px;color:#111;transform:scaleX(0.8314);transform-origin:0 0;">Type</div>
<div class="t" style="left:875.20px;top:108.30px;font-size:9.7px;color:#111;transform:scaleX(0.8775);transform-origin:0 0;">Total Size</div>
<div class="r" style="left:725px;top:107px;width:1px;height:14px;background:#e5e5e5;"></div>
<div class="r" style="left:871px;top:107px;width:1px;height:14px;background:#e5e5e5;"></div>
<div class="r" style="left:725px;top:121px;width:1px;height:457px;background:#eef5fc;"></div>
<div class="r" style="left:871px;top:121px;width:1px;height:457px;background:#eef5fc;"></div>
<div class="t" style="left:616.80px;top:123.30px;font-size:9.7px;color:#1e3a8a;transform:scaleX(0.8529);transform-origin:0 0;">Folders (7)</div>
<div class="r" style="left:660px;top:128px;width:295px;height:1px;background:#cfdcf0;"></div>
<div class="t" style="left:627.30px;top:138.30px;font-size:9.7px;color:#111;transform:scaleX(0.8714);transform-origin:0 0;">3D Objects</div>
<div class="t" style="left:729.10px;top:138.30px;font-size:9.7px;color:#111;transform:scaleX(0.8654);transform-origin:0 0;">System Folder</div>
<div class="t" style="left:627.30px;top:152.30px;font-size:9.7px;color:#111;transform:scaleX(0.8708);transform-origin:0 0;">Desktop</div>
<div class="t" style="left:729.10px;top:152.30px;font-size:9.7px;color:#111;transform:scaleX(0.8654);transform-origin:0 0;">System Folder</div>
<div class="t" style="left:627.30px;top:167.30px;font-size:9.7px;color:#111;transform:scaleX(0.8842);transform-origin:0 0;">Documents</div>
<div class="t" style="left:729.10px;top:167.30px;font-size:9.7px;color:#111;transform:scaleX(0.8654);transform-origin:0 0;">System Folder</div>
<div class="t" style="left:627.30px;top:181.30px;font-size:9.7px;color:#111;transform:scaleX(0.9048);transform-origin:0 0;">Downloads</div>
<div class="t" style="left:729.10px;top:181.30px;font-size:9.7px;color:#111;transform:scaleX(0.8654);transform-origin:0 0;">System Folder</div>
<div class="t" style="left:627.30px;top:196.30px;font-size:9.7px;color:#111;transform:scaleX(0.8453);transform-origin:0 0;">Music</div>
<div class="t" style="left:729.10px;top:196.30px;font-size:9.7px;color:#111;transform:scaleX(0.8654);transform-origin:0 0;">System Folder</div>
<div class="t" style="left:627.30px;top:210.30px;font-size:9.7px;color:#111;transform:scaleX(0.8339);transform-origin:0 0;">Pictures</div>
<div class="t" style="left:729.10px;top:210.30px;font-size:9.7px;color:#111;transform:scaleX(0.8654);transform-origin:0 0;">System Folder</div>
<div class="t" style="left:627.30px;top:225.30px;font-size:9.7px;color:#111;transform:scaleX(0.8715);transform-origin:0 0;">Videos</div>
<div class="t" style="left:729.10px;top:225.30px;font-size:9.7px;color:#111;transform:scaleX(0.8654);transform-origin:0 0;">System Folder</div>
<div class="t" style="left:616.60px;top:241.30px;font-size:9.7px;color:#1e3a8a;transform:scaleX(0.8703);transform-origin:0 0;">Devices and drives (3)</div>
<div class="r" style="left:704px;top:247px;width:251px;height:1px;background:#cfdcf0;"></div>
<div class="t" style="left:627.10px;top:257.30px;font-size:9.7px;color:#111;transform:scaleX(0.8477);transform-origin:0 0;">Local Disk (C:)</div>
<div class="t" style="left:933.40px;top:257.30px;font-size:9.7px;color:#111;transform:scaleX(0.8096);transform-origin:0 0;">150 G</div>
<div class="t" style="left:729.90px;top:257.30px;font-size:9.7px;color:#111;transform:scaleX(0.8613);transform-origin:0 0;">Local Disk</div>
<div class="t" style="left:627.10px;top:271.30px;font-size:9.7px;color:#111;transform:scaleX(0.8422);transform-origin:0 0;">Local Disk (E:)</div>
<div class="t" style="left:932.60px;top:271.30px;font-size:9.7px;color:#111;transform:scaleX(0.8399);transform-origin:0 0;">487 G</div>
<div class="t" style="left:729.90px;top:271.30px;font-size:9.7px;color:#111;transform:scaleX(0.8613);transform-origin:0 0;">Local Disk</div>
<div class="t" style="left:627.10px;top:286.30px;font-size:9.7px;color:#111;transform:scaleX(0.8446);transform-origin:0 0;">Local Disk (F:)</div>
<div class="t" style="left:933.00px;top:286.30px;font-size:9.7px;color:#111;transform:scaleX(0.8247);transform-origin:0 0;">292 G</div>
<div class="t" style="left:729.90px;top:286.30px;font-size:9.7px;color:#111;transform:scaleX(0.8613);transform-origin:0 0;">Local Disk</div>
<svg class="r" style="left:614px;top:137px;" width="12" height="12" viewBox="0 0 12 12"><path d="M6 0.6L11.4 2.6V9.4L6 11.4L0.6 9.4V2.6Z" fill="#1fb2e4"/><path d="M0.6 2.6L6 0.6L11.4 2.6L6 4.6Z" fill="#5fd0f2"/><path d="M0.6 2.6L6 4.6V11.4L0.6 9.4Z" fill="#2cc0ec"/><path d="M1.5 4.2H4.2V8.2H1.5Z" fill="#bdeeff"/><path d="M6 11.4L11.4 9.4L6 7.2Z" fill="#10477f"/></svg>
<svg class="r" style="left:614px;top:153px;" width="11" height="9" viewBox="0 0 11 9"><rect x="0" y="0.6" width="11" height="8.2" fill="#0f98f2"/><rect x="0" y="7.2" width="11" height="1.6" fill="#0066c4"/><rect x="0" y="0.6" width="11" height="0.8" fill="#2aa8f6"/></svg>
<svg class="r" style="left:615px;top:166px;" width="10" height="12" viewBox="0 0 10 12"><rect x="0.6" y="0.8" width="8.6" height="10.8" rx="0.8" fill="#ececec" stroke="#b4b4b4" stroke-width="0.9"/><path d="M1.5 4.8Q1.4 2.6 3.3 2.6Q4 1.3 5.4 1.9Q7.3 1.9 7.4 3.8Q8.3 4.3 7.6 5.6H2.2Q1.6 5.4 1.5 4.8Z" fill="#2ab4f0"/><circle cx="6.4" cy="7.6" r="1.1" fill="#1c4f86"/></svg>
<svg class="r" style="left:614px;top:182px;" width="11" height="11" viewBox="0 0 11 11"><path d="M3.7 0.6H7.3V5H10.6L5.5 10.6L0.4 5H3.7Z" fill="#1686e2"/></svg>
<svg class="r" style="left:616px;top:195px;" width="8" height="11" viewBox="0 0 8 11"><path d="M3.4 0.4V8.3" stroke="#1c92ea" stroke-width="1.4"/><ellipse cx="2.2" cy="8.7" rx="2.1" ry="1.8" fill="#1c92ea"/><path d="M3.2 0.4Q6.8 2.2 7.2 5.8Q6 3.8 3.6 3.6Z" fill="#1c92ea"/></svg>
<svg class="r" style="left:614px;top:211px;" width="12" height="9" viewBox="0 0 12 9"><rect x="0.5" y="0.5" width="10.6" height="8" fill="#f4f4f4" stroke="#bdbdbd" stroke-width="0.9"/><rect x="1.5" y="1.5" width="8.6" height="6" fill="#3aa6ea"/><path d="M1.5 3.6Q5.5 2.6 10.1 3.8V4.8Q6 3.8 1.5 4.6Z" fill="#e6f4ff"/><path d="M1.5 7.5V5.2Q3.5 4.6 5.5 6.2Q7.5 7 10.1 6.6V7.5Z" fill="#1f5a34"/></svg>
<svg class="r" style="left:614px;top:224px;" width="12" height="12" viewBox="0 0 12 12"><rect x="0.4" y="0" width="10.8" height="12" fill="#7a7a7a"/><rect x="0.4" y="0" width="1.6" height="12" fill="#a8a8a8"/><rect x="9.6" y="0" width="1.6" height="12" fill="#a8a8a8"/><rect x="2.4" y="0.6" width="6.8" height="10.8" fill="#1c78e0"/><path d="M5.5 1.2H9.2V4.5H6Z" fill="#f0a020"/><path d="M2.4 4H5.5V5.6H2.4Z" fill="#e86a1a"/><path d="M5.5 5H9.2V6.6H5.5Z" fill="#2a9a3a"/><path d="M6 9H9.2V11.4H6Z" fill="#3aa848"/><path d="M5 7.2L6.6 8.2L5 9Z" fill="#c46a2a"/></svg>
<svg class="r" style="left:614px;top:0px;top:258px;" width="12" height="10" viewBox="0 0 12 10"><path d="M0.5 6.3L5 3.3L11.2 4.7V6.7L5.6 9.1L0.5 7.9Z" fill="#d0d0d0"/><path d="M0.5 6.3L5 3.3L11.2 4.7L5.6 7.4Z" fill="#f3f3f3"/><path d="M5.6 7.4L11.2 4.7V6.7L5.6 9.1Z" fill="#b9b9b9"/><path d="M0.5 6.3L5.6 7.4V9.1L0.5 7.9Z" fill="#1c1c1c"/><path d="M3.6 7.6L5 7.9V8.6L3.6 8.3Z" fill="#26c04e"/><rect x="0" y="0.7" width="5" height="4.4" fill="#08aaf2"/><path d="M2.5 0.7V5.1M0 2.9H5" stroke="#8fe0ff" stroke-width="0.45"/></svg>
<svg class="r" style="left:614px;top:0px;top:272.5px;" width="12" height="10" viewBox="0 0 12 10"><path d="M0.5 6.3L5 3.3L11.2 4.7V6.7L5.6 9.1L0.5 7.9Z" fill="#d0d0d0"/><path d="M0.5 6.3L5 3.3L11.2 4.7L5.6 7.4Z" fill="#f3f3f3"/><path d="M5.6 7.4L11.2 4.7V6.7L5.6 9.1Z" fill="#b9b9b9"/><path d="M0.5 6.3L5.6 7.4V9.1L0.5 7.9Z" fill="#1c1c1c"/><path d="M3.6 7.6L5 7.9V8.6L3.6 8.3Z" fill="#26c04e"/></svg>
<svg class="r" style="left:614px;top:0px;top:287px;" width="12" height="10" viewBox="0 0 12 10"><path d="M0.5 6.3L5 3.3L11.2 4.7V6.7L5.6 9.1L0.5 7.9Z" fill="#d0d0d0"/><path d="M0.5 6.3L5 3.3L11.2 4.7L5.6 7.4Z" fill="#f3f3f3"/><path d="M5.6 7.4L11.2 4.7V6.7L5.6 9.1Z" fill="#b9b9b9"/><path d="M0.5 6.3L5.6 7.4V9.1L0.5 7.9Z" fill="#1c1c1c"/><path d="M3.6 7.6L5 7.9V8.6L3.6 8.3Z" fill="#26c04e"/></svg>
<div class="r" style="left:610px;top:565px;width:345px;height:11px;background:#efefef;"></div>
<div class="r" style="left:622px;top:565px;width:247px;height:11px;background:#cbcbcb;"></div>
<svg class="r" style="left:613px;top:568px;" width="5" height="6" viewBox="0 0 5 6"><path d="M4 0.5L1.2 3L4 5.5" stroke="#222" stroke-width="1.2" fill="none"/></svg>
<svg class="r" style="left:946px;top:568px;" width="5" height="6" viewBox="0 0 5 6"><path d="M1 0.5L3.8 3L1 5.5" stroke="#222" stroke-width="1.2" fill="none"/></svg>
<div class="r" style="left:669px;top:576px;width:2px;height:2px;background:#5a9ae8;"></div>
<div class="r" style="left:313px;top:86px;width:436px;height:2px;background:#80b2f6;"></div>
<div class="r" style="left:750px;top:86px;width:4px;height:4px;background:#6aa2ec;"></div>
<div class="r" style="left:313px;top:89px;width:269px;height:1px;background:#d2c9c0;"></div>
<div class="r" style="left:665px;top:89px;width:85px;height:1px;background:#d2c9c0;"></div>
<div class="r" style="left:958px;top:31px;width:1px;height:547px;background:#62a6e4;"></div>
<div class="r" style="left:959px;top:0px;width:1px;height:578px;background:#0a6cd6;"></div>
<div class="r" style="left:958px;top:0px;width:1px;height:31px;background:#1a6cc0;"></div>
</body></html>
